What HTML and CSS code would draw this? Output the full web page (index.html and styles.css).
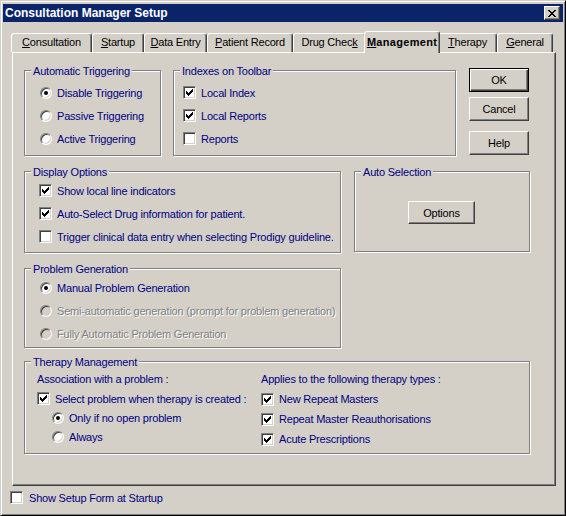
FILE: index.html
```html
<!DOCTYPE html>
<html lang="en">
<head>
  <meta charset="UTF-8" />
  <title>Consultation Manager Setup</title>
  <link rel="stylesheet" href="styles.css">
</head>
<body>

  <div class="window">
    <div class="titlebar">
      <span class="title">Consultation Manager Setup</span>
      <span class="close-btn">
        <svg width="8" height="7" viewBox="0 0 8 7" shape-rendering="crispEdges">
          <path fill="#000" d="M0 0h2v1h-2z M6 0h2v1h-2z M1 1h2v1h-2z M5 1h2v1h-2z M2 2h4v1h-4z M3 3h2v1h-2z M2 4h4v1h-4z M1 5h2v1h-2z M5 5h2v1h-2z M0 6h2v1h-2z M6 6h2v1h-2z"/>
        </svg>
      </span>
    </div>

    <div class="tabs">
      <div class="tab tab-consultation"><u>C</u>onsultation</div>
      <div class="tab tab-startup"><u>S</u>tartup</div>
      <div class="tab tab-data"><u>D</u>ata Entry</div>
      <div class="tab tab-patient"><u>P</u>atient Record</div>
      <div class="tab tab-drug">Drug Chec<u>k</u></div>
      <div class="tab tab-management active"><u>M</u>anagement</div>
      <div class="tab tab-therapy"><u>T</u>herapy</div>
      <div class="tab tab-general"><u>G</u>eneral</div>
    </div>

    <div class="panel">

      <div class="row">
        <div class="group group-triggering">
          <div class="group-title">Automatic Triggering</div>
          <div class="options">
            <div class="option"><span class="radio checked"></span>Disable Triggering</div>
            <div class="option"><span class="radio"></span>Passive Triggering</div>
            <div class="option"><span class="radio"></span>Active Triggering</div>
          </div>
        </div>

        <div class="group group-indexes">
          <div class="group-title">Indexes on Toolbar</div>
          <div class="options">
            <div class="option"><span class="check checked"><svg width="7" height="7" viewBox="0 0 7 7" shape-rendering="crispEdges"><path d="M0 2H1V3H2V4H3V3H4V2H5V1H6V0H7V3H6V4H5V5H4V6H3V7H2V6H1V5H0Z"/></svg></span>Local Index</div>
            <div class="option"><span class="check checked"><svg width="7" height="7" viewBox="0 0 7 7" shape-rendering="crispEdges"><path d="M0 2H1V3H2V4H3V3H4V2H5V1H6V0H7V3H6V4H5V5H4V6H3V7H2V6H1V5H0Z"/></svg></span>Local Reports</div>
            <div class="option"><span class="check"></span>Reports</div>
          </div>
        </div>

        <div class="buttons">
          <div class="btn btn-default">OK</div>
          <div class="btn btn-cancel">Cancel</div>
          <div class="btn btn-help">Help</div>
        </div>
      </div>

      <div class="row row-display">
        <div class="group group-display">
          <div class="group-title">Display Options</div>
          <div class="options">
            <div class="option"><span class="check checked"><svg width="7" height="7" viewBox="0 0 7 7" shape-rendering="crispEdges"><path d="M0 2H1V3H2V4H3V3H4V2H5V1H6V0H7V3H6V4H5V5H4V6H3V7H2V6H1V5H0Z"/></svg></span>Show local line indicators</div>
            <div class="option"><span class="check checked"><svg width="7" height="7" viewBox="0 0 7 7" shape-rendering="crispEdges"><path d="M0 2H1V3H2V4H3V3H4V2H5V1H6V0H7V3H6V4H5V5H4V6H3V7H2V6H1V5H0Z"/></svg></span>Auto-Select Drug information for patient.</div>
            <div class="option"><span class="check"></span>Trigger clinical data entry when selecting Prodigy guideline.</div>
          </div>
        </div>

        <div class="group group-auto">
          <div class="group-title">Auto Selection</div>
          <div class="btn btn-options">Options</div>
        </div>
      </div>

      <div class="row row-problem">
        <div class="group group-problem">
          <div class="group-title">Problem Generation</div>
          <div class="options">
            <div class="option"><span class="radio checked"></span>Manual Problem Generation</div>
            <div class="option disabled"><span class="radio"></span>Semi-automatic generation (prompt for problem generation)</div>
            <div class="option disabled"><span class="radio"></span>Fully Automatic Problem Generation</div>
          </div>
        </div>
      </div>

      <div class="row row-therapy">
        <div class="group group-therapy">
          <div class="group-title">Therapy Management</div>
          <div class="therapy-body">
            <div class="therapy-col therapy-left">
              <div class="therapy-heading">Association with a problem :</div>
              <div class="option"><span class="check checked"><svg width="7" height="7" viewBox="0 0 7 7" shape-rendering="crispEdges"><path d="M0 2H1V3H2V4H3V3H4V2H5V1H6V0H7V3H6V4H5V5H4V6H3V7H2V6H1V5H0Z"/></svg></span>Select problem when therapy is created :</div>
              <div class="option sub"><span class="radio checked"></span>Only if no open problem</div>
              <div class="option sub"><span class="radio"></span>Always</div>
            </div>
            <div class="therapy-col therapy-right">
              <div class="therapy-heading">Applies to the following therapy types :</div>
              <div class="option"><span class="check checked"><svg width="7" height="7" viewBox="0 0 7 7" shape-rendering="crispEdges"><path d="M0 2H1V3H2V4H3V3H4V2H5V1H6V0H7V3H6V4H5V5H4V6H3V7H2V6H1V5H0Z"/></svg></span>New Repeat Masters</div>
              <div class="option"><span class="check checked"><svg width="7" height="7" viewBox="0 0 7 7" shape-rendering="crispEdges"><path d="M0 2H1V3H2V4H3V3H4V2H5V1H6V0H7V3H6V4H5V5H4V6H3V7H2V6H1V5H0Z"/></svg></span>Repeat Master Reauthorisations</div>
              <div class="option"><span class="check checked"><svg width="7" height="7" viewBox="0 0 7 7" shape-rendering="crispEdges"><path d="M0 2H1V3H2V4H3V3H4V2H5V1H6V0H7V3H6V4H5V5H4V6H3V7H2V6H1V5H0Z"/></svg></span>Acute Prescriptions</div>
            </div>
          </div>
        </div>
      </div>

    </div>

    <div class="footer">
      <span class="check"></span>Show Setup Form at Startup
    </div>
  </div>

</body>
</html>
```

FILE: styles.css
```css
* {
  box-sizing: border-box;
}

body {
  margin: 0;
  background: #d4d0c8;
  font-family: 'Liberation Sans', Arial, sans-serif;
  font-size: 11px;
  letter-spacing: -0.2px;
  color: #000;
}

.window {
  width: 566px;
  height: 516px;
  border: 1px solid;
  border-color: #d4d0c8 #000 #000 #d4d0c8;
  box-shadow: inset 1px 1px 0 #fff, inset -1px -1px 0 #808080;
  padding: 3px 2px 2px 2px;
  background: #d4d0c8;
}

/* title bar */
.titlebar {
  height: 18px;
  background: #0a246a;
  display: flex;
  align-items: center;
  justify-content: space-between;
  padding: 0 3px 0 2px;
}

.title {
  color: #fff;
  font-size: 12px;
  font-weight: bold;
  letter-spacing: 0;
}

.close-btn {
  width: 16px;
  height: 14px;
  display: flex;
  align-items: center;
  justify-content: center;
  background: #d4d0c8;
  border: 1px solid;
  border-color: #fff #404040 #404040 #fff;
  box-shadow: inset -1px -1px 0 #808080;
  padding-right: 1px;
}

/* tabs */
.tabs {
  display: flex;
  align-items: flex-end;
  height: 21px;
  margin: 9px 0 0 8px;
}

.tab {
  height: 19px;
  display: flex;
  align-items: center;
  justify-content: center;
  padding-bottom: 2px;
  border: 1px solid;
  border-bottom: none;
  border-color: #fff #404040 transparent #fff;
  box-shadow: inset -1px 0 0 #808080;
  border-radius: 3px 3px 0 0;
  background: #d4d0c8;
}

.tab-consultation { width: 81px; }
.tab-startup { width: 52px; }
.tab-data { width: 63px; }
.tab-patient { width: 86px; }
.tab-drug { width: 73px; }
.tab-management { width: 72px; }
.tab-therapy { width: 59px; }
.tab-general { width: 56px; }

.tab.active {
  width: 76px;
  height: 22px;
  margin: 0 -2px -1px;
  padding-bottom: 1px;
  position: relative;
  z-index: 1;
  font-weight: bold;
  letter-spacing: 0.3px;
}

/* panel */
.panel {
  margin-left: 9px;
  width: 544px;
  height: 434px;
  border: 1px solid;
  border-color: #fff #404040 #404040 #fff;
  box-shadow: inset -1px -1px 0 #808080;
  padding: 17px 0 0 11px;
}

.row {
  display: flex;
  align-items: flex-start;
}

.row-display { margin-top: 15px; }
.row-problem { margin-top: 15px; }
.row-therapy { margin-top: 13px; }

.group {
  border: 1px solid #808080;
  box-shadow: 1px 1px 0 #fff, inset 1px 1px 0 #fff;
}

.group-title {
  width: max-content;
  margin: -7px 0 0 6px;
  padding: 0 2px;
  line-height: 14px;
  background: #d4d0c8;
  color: #000080;
}

.group-triggering { width: 137px; height: 86px; }
.group-triggering .options { padding: 3px 0 0 15px; }

.group-indexes { width: 283px; height: 86px; margin-left: 12px; }
.group-indexes .options { padding: 3px 0 0 9px; }

.group-display { width: 317px; height: 82px; }
.group-display .options { padding: 0 0 0 14px; }

.group-auto { width: 176px; height: 81px; margin-left: 13px; }

.group-problem { width: 317px; height: 80px; }
.group-problem .options { padding: 0 0 0 15px; }

.group-therapy { width: 506px; height: 93px; }

.option {
  display: flex;
  align-items: center;
  height: 23px;
  color: #000080;
  white-space: nowrap;
}

.option.disabled {
  color: #808080;
  text-shadow: 1px 1px 0 #fff;
}

/* radio and checkbox */
.radio {
  flex: none;
  width: 12px;
  height: 12px;
  margin-right: 5px;
  border-radius: 50%;
  border: 1px solid;
  border-color: #808080 #fff #fff #808080;
  box-shadow: inset 1px 1px 0 #404040, inset -1px -1px 0 #d4d0c8;
  background: #fff;
  display: flex;
  align-items: center;
  justify-content: center;
}

.radio.checked::after {
  content: "";
  width: 4px;
  height: 4px;
  border-radius: 50%;
  background: #000;
}

.option.disabled .radio {
  background: #d4d0c8;
}

.check {
  flex: none;
  width: 13px;
  height: 13px;
  margin-right: 5px;
  border: 1px solid;
  border-color: #808080 #fff #fff #808080;
  box-shadow: inset 1px 1px 0 #404040, inset -1px -1px 0 #d4d0c8;
  background: #fff;
}

.check svg {
  display: block;
  margin: 2px;
}

/* buttons */
.buttons {
  display: flex;
  flex-direction: column;
  margin: -2px 0 0 13px;
}

.btn {
  width: 60px;
  height: 24px;
  display: flex;
  align-items: center;
  justify-content: center;
  border: 1px solid;
  border-color: #fff #404040 #404040 #fff;
  box-shadow: inset -1px -1px 0 #808080;
  color: #000;
}

.btn-default {
  border-color: #000;
  box-shadow: inset 1px 1px 0 #fff, inset -1px -1px 0 #404040, inset -2px -2px 0 #808080;
}

.btn-cancel { margin-top: 5px; }
.btn-help { margin-top: 10px; }

.btn-options {
  width: 67px;
  height: 23px;
  margin: 22px 0 0 53px;
}

/* therapy management */
.therapy-body {
  display: flex;
  padding-left: 12px;
}

.therapy-left { width: 224px; }

.therapy-heading {
  height: 20px;
  line-height: 20px;
  color: #000080;
  white-space: nowrap;
}

.therapy-left .option { height: 19px; }
.therapy-right .option { height: 20px; }

.option.sub { padding-left: 15px; }

/* footer */
.footer {
  display: flex;
  align-items: center;
  height: 13px;
  margin-top: 5px;
  padding-left: 7px;
  color: #000080;
}

.footer .check {
  margin-right: 6px;
}
```
